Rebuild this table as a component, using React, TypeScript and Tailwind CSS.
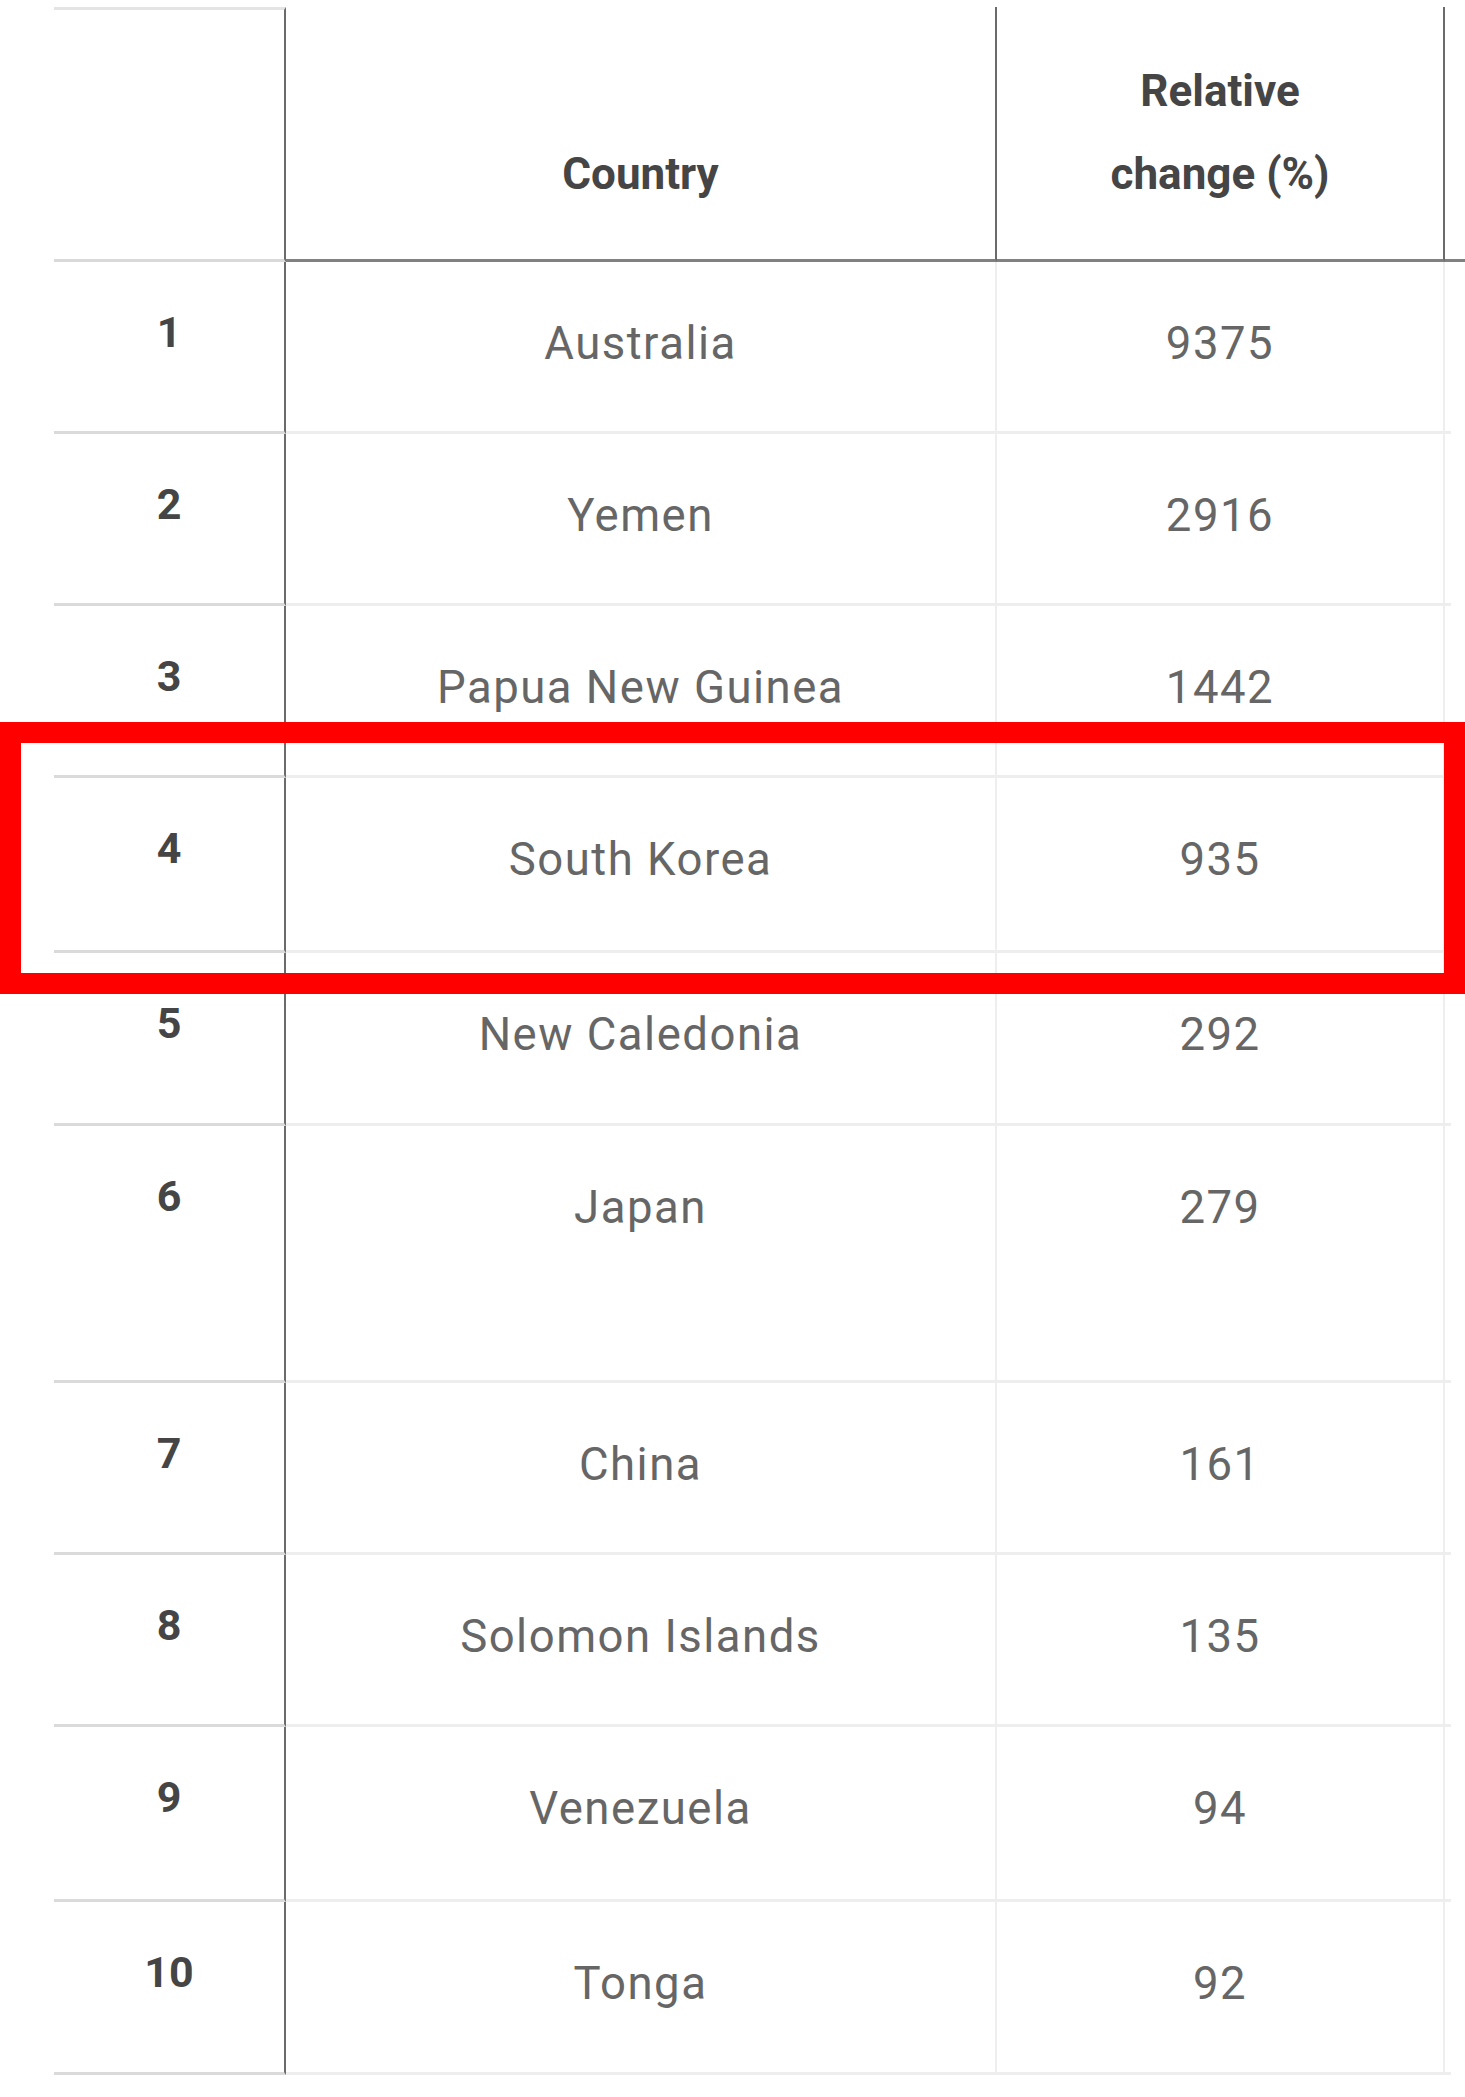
const ROWS = [
  { rank: 1, country: "Australia", change: "9375", h: "h-[172px]" },
  { rank: 2, country: "Yemen", change: "2916", h: "h-[172px]" },
  { rank: 3, country: "Papua New Guinea", change: "1442", h: "h-[172px]" },
  { rank: 4, country: "South Korea", change: "935", h: "h-[175px]" },
  { rank: 5, country: "New Caledonia", change: "292", h: "h-[173px]" },
  { rank: 6, country: "Japan", change: "279", h: "h-[257px]" },
  { rank: 7, country: "China", change: "161", h: "h-[172px]" },
  { rank: 8, country: "Solomon Islands", change: "135", h: "h-[172px]" },
  { rank: 9, country: "Venezuela", change: "94", h: "h-[175px]" },
  { rank: 10, country: "Tonga", change: "92", h: "h-[173px]" },
];

export default function App() {
  return (
    <div className="relative w-[1465px] h-[2097px] overflow-hidden bg-white pl-[54px] pt-[7px] font-['Roboto',sans-serif]">
      {/* header */}
      <div className="flex h-[255px]">
        <div className="w-[232px] shrink-0 border-t-[3px] border-t-[#e4e4e4] border-r-2 border-r-[#6b6b6b] border-b-[3px] border-b-[#d9d9d9]" />
        <div className="w-[711px] shrink-0 flex items-end justify-center pb-[43px] border-r-2 border-r-[#6b6b6b] border-b-[3px] border-b-[#808080]">
          <span className="text-[44px] leading-[83px] font-bold text-[#454545]">Country</span>
        </div>
        <div className="w-[448px] shrink-0 flex items-end justify-center pb-[43px] border-r-2 border-r-[#6b6b6b] border-b-[3px] border-b-[#808080] text-center">
          <span className="text-[44px] leading-[83px] font-bold text-[#454545]">
            Relative
            <br />
            change (%)
          </span>
        </div>
        <div className="flex-1 border-b-[3px] border-b-[#808080]" />
      </div>

      {/* body */}
      {ROWS.map((r) => (
        <div key={r.rank} className={`flex ${r.h}`}>
          <div className="w-[232px] shrink-0 pt-[41px] text-center border-r-2 border-r-[#6b6b6b] border-b-[3px] border-b-[#dadada]">
            <span className="text-[43px] leading-[58px] font-bold text-[#454545]">{r.rank}</span>
          </div>
          <div className="w-[711px] shrink-0 pt-[53px] text-center border-r-2 border-r-[#eeeeee] border-b-[3px] border-b-[#eeeeee]">
            <span className="text-[45.5px] leading-[58px] tracking-[1.5px] text-[#666666]">{r.country}</span>
          </div>
          <div className="w-[448px] shrink-0 pt-[53px] text-center border-r-2 border-r-[#eeeeee] border-b-[3px] border-b-[#eeeeee]">
            <span className="text-[45.5px] leading-[58px] tracking-[1.5px] text-[#666666]">{r.change}</span>
          </div>
          <div className="w-[6px] shrink-0 border-b-[3px] border-b-[#eeeeee]" />
        </div>
      ))}

      {/* highlight */}
      <div className="absolute left-0 top-[722px] w-[1465px] h-[272px] border-[21px] border-[#ff0000]" />
    </div>
  );
}
